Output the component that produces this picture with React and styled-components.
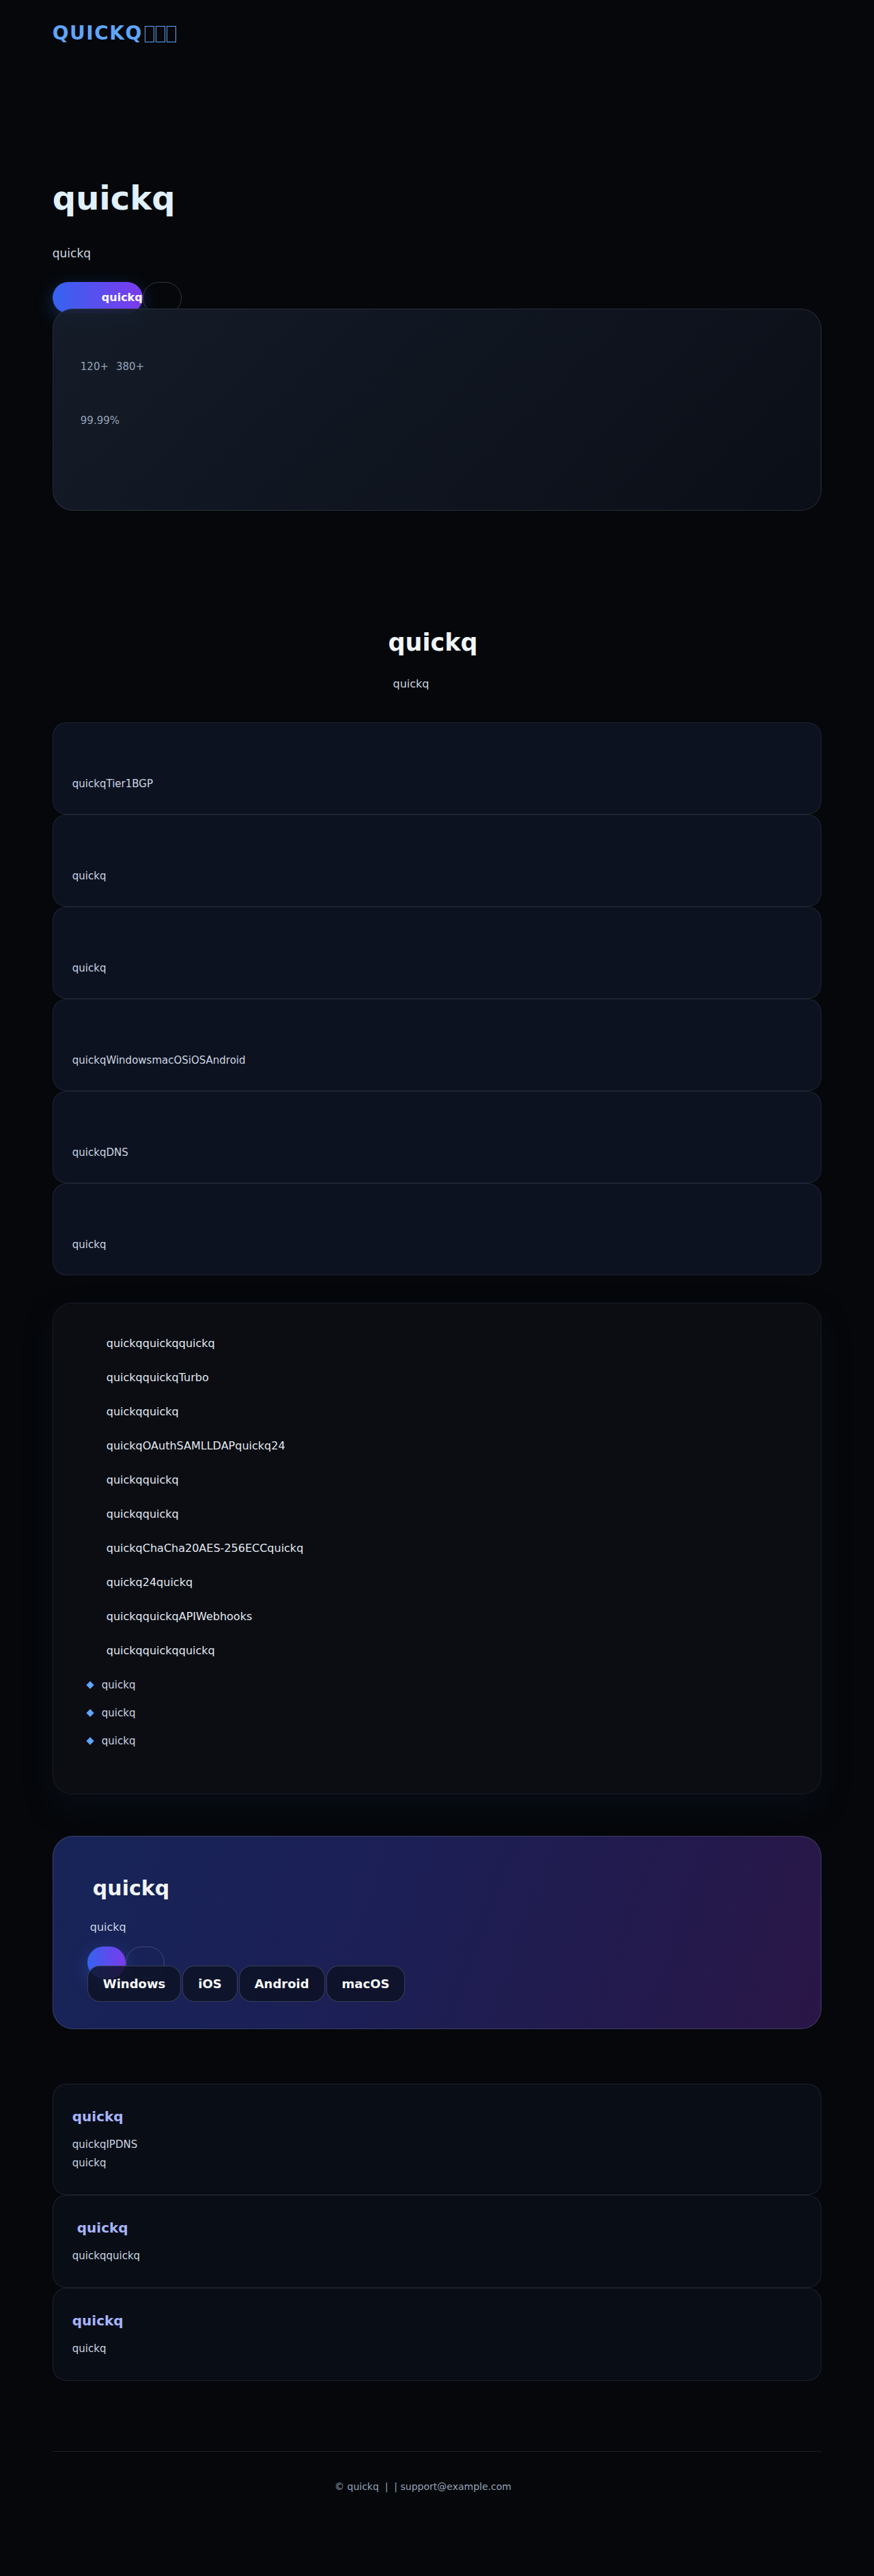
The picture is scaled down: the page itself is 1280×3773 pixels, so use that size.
import React from 'react';
import styled, { createGlobalStyle } from 'styled-components';

const GlobalStyle = createGlobalStyle`
  html, body {
    margin: 0;
    padding: 0;
    background: #05070a;
  }
  body {
    font-family: "DejaVu Sans", "Liberation Sans", sans-serif;
    color: #e2e8f0;
  }
  * { box-sizing: border-box; }
`;

const Page = styled.div`
  width: 88%;
  margin: 0 auto;
`;

const Header = styled.header`
  padding-top: 32px;
`;

const Logo = styled.div`
  font-size: 28px;
  line-height: 1.2;
  font-weight: 700;
  letter-spacing: 1.5px;
  color: #60a5fa;
`;

// missing-glyph boxes after the brand name
const Tofu = styled.span`
  display: inline-block;
  width: 14px;
  height: 24px;
  margin-left: ${p => p.first ? '3px' : '2px'};
  border: 1.5px solid #60a5fa;
  vertical-align: -4px;
`;

const Hero = styled.section`
  padding-top: 197px;
`;

const HeroTitle = styled.h1`
  margin: 0;
  font-size: 48px;
  line-height: 1.15;
  font-weight: 700;
  color: #e0f0ff;
`;

const HeroLead = styled.p`
  margin: 40px 0 0;
  font-size: 17px;
  line-height: 1.6;
  color: #cbd5e1;
`;

const Actions = styled.div`
  display: flex;
  margin-top: 28px;
  height: 46px;
`;

const PrimaryButton = styled.button`
  height: ${p => p.h || 46}px;
  min-width: 56px;
  padding: 0 0 0 ${p => p.pl || 0}px;
  border: none;
  border-radius: 999px;
  background: linear-gradient(90deg, #3563f0, #7c3aed);
  box-shadow: 0 8px 28px rgba(59, 130, 246, 0.3);
  color: #fff;
  font-family: inherit;
  font-size: 16px;
  font-weight: 700;
`;

const GhostButton = styled.button`
  width: 57px;
  height: 47px;
  padding: 0;
  border: 1px solid rgba(148, 163, 184, 0.3);
  border-radius: 999px;
  background: transparent;
`;

const StatsCard = styled.div`
  position: relative;
  margin-top: -7px;
  padding: 72px 40px 119px;
  border: 1px solid rgba(148, 163, 184, 0.18);
  border-radius: 30px;
  background: linear-gradient(135deg, rgba(22, 30, 43, 0.93), rgba(11, 15, 24, 0.96));
`;

const StatRow = styled.div`
  display: flex;
  gap: 11px;
  font-size: 15px;
  line-height: 24px;
  color: #94a3b8;
  & + & { margin-top: 55px; }
`;

const SectionTitle = styled.h2`
  margin: 172px 0 0;
  padding-right: 12px;
  text-align: center;
  font-size: 35px;
  line-height: 42px;
  font-weight: 700;
  color: #f1f5f9;
`;

const SectionLead = styled.p`
  margin: 27px 0 0;
  padding-right: 76px;
  text-align: center;
  font-size: 16px;
  line-height: 1.6;
  color: #cbd5e1;
`;

const FeatureStack = styled.div`
  display: flex;
  flex-direction: column;
  margin-top: 43px;
`;

const FeatureCard = styled.div`
  height: 135px;
  padding: 28px 28px 32px;
  border: 1px solid rgba(148, 163, 184, 0.13);
  border-radius: 20px;
  background: #0d1220;
`;

const FeatureIcon = styled.div`
  height: 49px;
`;

const FeatureText = styled.p`
  margin: 0;
  font-size: 15px;
  line-height: 24px;
  color: #cbd5e1;
`;

const ListCard = styled.div`
  margin-top: 40px;
  padding: 34px 48px 56px;
  border: 1px solid rgba(148, 163, 184, 0.1);
  border-radius: 28px;
  background: #0b0d13;
  box-shadow: 0 18px 40px rgba(15, 23, 42, 0.4);
`;

const ListRow = styled.div`
  padding: 12px 0 12px 30px;
  font-size: 16px;
  line-height: 26px;
  color: #e2e8f0;
`;

const Bullets = styled.ul`
  margin: 5px 0 0;
  padding: 0;
  list-style: none;
`;

const Bullet = styled.li`
  display: flex;
  align-items: center;
  gap: 13px;
  padding: 8px 0 8px 2px;
  font-size: 15px;
  line-height: 25px;
  color: #cbd5e1;
`;

const Diamond = styled.span`
  width: 8px;
  height: 8px;
  flex-shrink: 0;
  background: #60a5fa;
  transform: rotate(45deg);
`;

const CtaCard = styled.section`
  margin-top: 61px;
  padding: 58px 50px 39px;
  border: 1px solid rgba(148, 163, 184, 0.25);
  border-radius: 30px;
  background: linear-gradient(110deg, #172458 0%, #1c1f55 45%, #231a4d 75%, #2a1647 100%);
`;

const CtaTitle = styled.h2`
  margin: 0;
  padding-left: 8px;
  font-size: 30px;
  line-height: 36px;
  font-weight: 700;
  color: #f1f5f9;
`;

const CtaLead = styled.p`
  margin: 26px 0 0;
  padding-left: 4px;
  font-size: 16px;
  line-height: 1.6;
  color: #cbd5e1;
`;

const CtaActions = styled.div`
  display: flex;
  margin-top: 16px;
  height: 47px;
`;

const Platforms = styled.div`
  position: relative;
  display: flex;
  gap: 2px;
  margin-top: -19px;
`;

const PlatformButton = styled.button`
  height: 53px;
  padding: 0 22px;
  border: 1px solid rgba(148, 163, 184, 0.3);
  border-radius: 18px;
  background: rgba(12, 17, 34, 0.82);
  color: #f8fafc;
  font-family: inherit;
  font-size: 18px;
  font-weight: 700;
`;

const FaqList = styled.section`
  display: flex;
  flex-direction: column;
  margin-top: 80px;
`;

const FaqCard = styled.div`
  padding: 34px 28px 32px;
  border: 1px solid rgba(148, 163, 184, 0.14);
  border-radius: 20px;
  background: #090d15;
`;

const FaqTitle = styled.h3`
  margin: 0 0 15px;
  padding-left: ${p => p.indent || 0}px;
  font-size: 20px;
  line-height: 26px;
  font-weight: 700;
  color: #a5b4fc;
`;

const FaqBody = styled.p`
  margin: 0;
  font-size: 15px;
  line-height: 27px;
  color: #cbd5e1;
`;

const Footer = styled.footer`
  margin-top: 103px;
  padding: 40px 41px 120px 0;
  border-top: 1px solid rgba(148, 163, 184, 0.16);
  text-align: center;
  font-size: 14px;
  line-height: 1.6;
  color: #94a3b8;
  white-space: pre;
`;

const features = [
  'quickqTier1BGP',
  'quickq',
  'quickq',
  'quickqWindowsmacOSiOSAndroid',
  'quickqDNS',
  'quickq',
];

const listItems = [
  'quickqquickqquickq',
  'quickqquickqTurbo',
  'quickqquickq',
  'quickqOAuthSAMLLDAPquickq24',
  'quickqquickq',
  'quickqquickq',
  'quickqChaCha20AES-256ECCquickq',
  'quickq24quickq',
  'quickqquickqAPIWebhooks',
  'quickqquickqquickq',
];

const faqs = [
  { q: 'quickq', a: ['quickqIPDNS', 'quickq'] },
  { q: 'quickq', a: ['quickqquickq'], indent: 7 },
  { q: 'quickq', a: ['quickq'] },
];

const App = () => {
  return <>
    <GlobalStyle />
    <Page>
      <Header>
        <Logo>QUICKQ<Tofu first /><Tofu /><Tofu /></Logo>
      </Header>

      <Hero>
        <HeroTitle>quickq</HeroTitle>
        <HeroLead>quickq</HeroLead>
        <Actions>
          <PrimaryButton pl={72}>quickq</PrimaryButton>
          <GhostButton />
        </Actions>
        <StatsCard>
          <StatRow><span>120+</span><span>380+</span></StatRow>
          <StatRow><span>99.99%</span></StatRow>
        </StatsCard>
      </Hero>

      <SectionTitle>quickq</SectionTitle>
      <SectionLead>quickq</SectionLead>
      <FeatureStack>
        {features.map((f, i) => (
          <FeatureCard key={i}>
            <FeatureIcon />
            <FeatureText>{f}</FeatureText>
          </FeatureCard>
        ))}
      </FeatureStack>

      <ListCard>
        {listItems.map((t, i) => <ListRow key={i}>{t}</ListRow>)}
        <Bullets>
          {[0, 1, 2].map(i => (
            <Bullet key={i}><Diamond />quickq</Bullet>
          ))}
        </Bullets>
      </ListCard>

      <CtaCard>
        <CtaTitle>quickq</CtaTitle>
        <CtaLead>quickq</CtaLead>
        <CtaActions>
          <PrimaryButton h={47} />
          <GhostButton />
        </CtaActions>
        <Platforms>
          <PlatformButton>Windows</PlatformButton>
          <PlatformButton>iOS</PlatformButton>
          <PlatformButton>Android</PlatformButton>
          <PlatformButton>macOS</PlatformButton>
        </Platforms>
      </CtaCard>

      <FaqList>
        {faqs.map((f, i) => (
          <FaqCard key={i}>
            <FaqTitle indent={f.indent}>{f.q}</FaqTitle>
            <FaqBody>{f.a.map((line, j) => <React.Fragment key={j}>{j > 0 && <br />}{line}</React.Fragment>)}</FaqBody>
          </FaqCard>
        ))}
      </FaqList>

      <Footer>{'© quickq  |  | support@example.com'}</Footer>
    </Page>
  </>;
};

export default App;
